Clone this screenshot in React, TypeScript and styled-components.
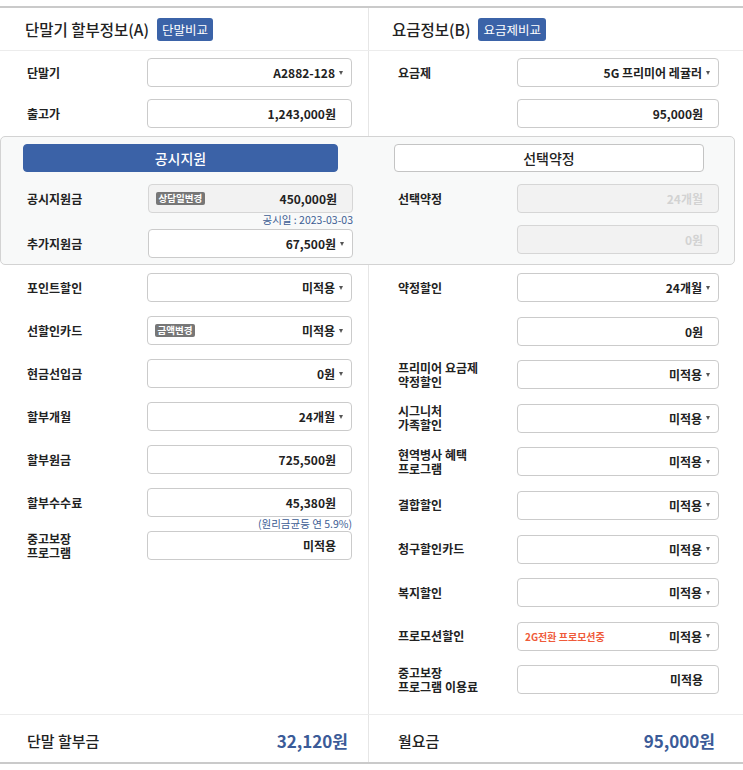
import styled, { createGlobalStyle } from 'styled-components'

const GlobalStyle = createGlobalStyle`
  body {
    margin: 0;
    background: #fff;
  }
`

const LEFT_INPUT = 205
const RIGHT_INPUT = 202

const Page = styled.div`
  padding-top: 6px;
  font-family: 'Noto Sans CJK KR', 'Noto Sans', sans-serif;
  color: #222;
`

const Frame = styled.div`
  border-top: 2px solid #cacaca;
  border-bottom: 2px solid #cacaca;
`

const Header = styled.div`
  display: grid;
  grid-template-columns: 368px 367px;
  height: 42px;
  border-bottom: 1px solid #ececec;
`

const HeaderCell = styled.div<{ $right?: boolean }>`
  display: flex;
  align-items: center;
  padding-left: ${({ $right }) => ($right ? '23px' : '25px')};
  border-left: ${({ $right }) => ($right ? '1px solid #e6e6e6' : 'none')};
`

const Title = styled.h2`
  margin: 0;
  font-size: 15.5px;
  font-weight: 500;
`

const Badge = styled.span`
  margin-left: 8px;
  height: 23px;
  line-height: 23px;
  padding: 0 5px;
  border-radius: 3px;
  background: #3b63a8;
  color: #fff;
  font-size: 12.5px;
`

const Section = styled.div`
  display: grid;
  grid-template-columns: 368px 367px;
`

const Column = styled.div<{ $right?: boolean; $pt: number; $pb: number }>`
  display: flex;
  flex-direction: column;
  padding: ${({ $pt, $pb, $right }) => `${$pt}px 16px ${$pb}px ${$right ? 29 : 27}px`};
  border-left: ${({ $right }) => ($right ? '1px solid #e6e6e6' : 'none')};
`

const Box = styled.div`
  width: 735px;
  box-sizing: border-box;
  display: grid;
  grid-template-columns: 367px 1fr;
  border: 1px solid #d3d3d3;
  border-radius: 5px;
  background: #f8f9f9;
`

const BoxColumn = styled.div<{ $right?: boolean }>`
  display: flex;
  flex-direction: column;
  padding: ${({ $right }) => ($right ? '7px 15px 6px 30px' : '7px 15px 6px 26px')};
`

const Tab = styled.div<{ $active?: boolean }>`
  height: 28px;
  box-sizing: border-box;
  margin: 0 15px 12px -4px;
  display: flex;
  align-items: center;
  justify-content: center;
  border-radius: 4px;
  font-size: 14px;
  font-weight: 500;
  background: ${({ $active }) => ($active ? '#3b62a7' : '#fff')};
  color: ${({ $active }) => ($active ? '#fff' : '#222')};
  border: 1px solid ${({ $active }) => ($active ? '#3b62a7' : '#c4c4c4')};
`

const Row = styled.div<{ $w: number }>`
  display: grid;
  grid-template-columns: 1fr ${({ $w }) => $w}px;
  align-items: center;
`

const Label = styled.div`
  font-size: 12px;
  font-weight: 600;
  line-height: 14px;
`

const Field = styled.div<{ $tone?: 'disabled' | 'muted'; $caret?: boolean }>`
  height: 29px;
  box-sizing: border-box;
  display: flex;
  align-items: center;
  justify-content: flex-end;
  padding: ${({ $caret }) => ($caret ? '0 8px 0 7px' : '0 15px 0 7px')};
  border: 1px solid ${({ $tone }) => ($tone ? '#d6d6d6' : '#cbcbcb')};
  border-radius: 4px;
  background: ${({ $tone }) => ($tone ? '#f2f2f2' : '#fff')};
  color: ${({ $tone }) => ($tone === 'disabled' ? '#d2d2d2' : '#222')};
  font-size: 12px;
  font-weight: 600;
`

const Tag = styled.span`
  margin-right: auto;
  height: 13px;
  line-height: 13px;
  padding: 0 2.5px;
  border-radius: 2px;
  background: #777;
  color: #fff;
  font-size: 9.5px;
  font-weight: 700;
`

const Promo = styled.span`
  margin-right: auto;
  color: #ef5b3b;
  font-size: 10px;
  font-weight: 700;
`

const Caret = styled.span`
  margin-left: 4px;
  width: 0;
  height: 0;
  border-left: 2.5px solid transparent;
  border-right: 2.5px solid transparent;
  border-top: 4px solid #555;
`

const Note = styled.div<{ $h: number }>`
  height: ${({ $h }) => $h}px;
  line-height: 13px;
  text-align: right;
  font-size: 10.5px;
  color: #3d5d94;
`

const Item = styled.div<{ $gap: number }>`
  margin-bottom: ${({ $gap }) => $gap}px;
  &:last-child {
    margin-bottom: 0;
  }
`

const Totals = styled.div`
  display: grid;
  grid-template-columns: 368px 367px;
  height: 47px;
  border-top: 1px solid #ececec;
`

const TotalCell = styled.div<{ $right?: boolean }>`
  display: flex;
  align-items: center;
  justify-content: space-between;
  padding: ${({ $right }) => ($right ? '3px 20px 0 29px' : '3px 20px 0 27px')};
  border-left: ${({ $right }) => ($right ? '1px solid #e6e6e6' : 'none')};
`

const TotalLabel = styled.span`
  font-size: 15px;
  font-weight: 500;
`

const TotalValue = styled.span`
  font-size: 17px;
  font-weight: 700;
  color: #3b5b98;
`

type FieldData = {
  label?: React.ReactNode
  value: string
  caret?: boolean
  tone?: 'disabled' | 'muted'
  tag?: string
  promo?: string
  note?: string
}

const Input = ({ item }: { item: FieldData }) => (
  <Field $caret={item.caret} $tone={item.tone}>
    {item.tag && <Tag>{item.tag}</Tag>}
    {item.promo && <Promo>{item.promo}</Promo>}
    <span>{item.value}</span>
    {item.caret && <Caret />}
  </Field>
)

const Rows = ({ items, w, gap, noteH }: { items: FieldData[]; w: number; gap: number; noteH: number }) => (
  <>
    {items.map((item, i) => (
      <Item key={i} $gap={item.note ? 0 : gap}>
        <Row $w={w}>
          <Label>{item.label}</Label>
          <Input item={item} />
        </Row>
        {item.note && <Note $h={noteH}>{item.note}</Note>}
      </Item>
    ))}
  </>
)

const topLeft: FieldData[] = [
  { label: '단말기', value: 'A2882-128', caret: true },
  { label: '출고가', value: '1,243,000원' },
]

const topRight: FieldData[] = [
  { label: '요금제', value: '5G 프리미어 레귤러', caret: true },
  { value: '95,000원' },
]

const boxLeft: FieldData[] = [
  { label: '공시지원금', value: '450,000원', tag: '상담일변경', tone: 'muted', note: '공시일 : 2023-03-03' },
  { label: '추가지원금', value: '67,500원', caret: true },
]

const boxRight: FieldData[] = [
  { label: '선택약정', value: '24개월', tone: 'disabled' },
  { value: '0원', tone: 'disabled' },
]

const bottomLeft: FieldData[] = [
  { label: '포인트할인', value: '미적용', caret: true },
  { label: '선할인카드', value: '미적용', caret: true, tag: '금액변경' },
  { label: '현금선입금', value: '0원', caret: true },
  { label: '할부개월', value: '24개월', caret: true },
  { label: '할부원금', value: '725,500원' },
  { label: '할부수수료', value: '45,380원', note: '(원리금균등 연 5.9%)' },
  { label: <>중고보장<br />프로그램</>, value: '미적용' },
]

const bottomRight: FieldData[] = [
  { label: '약정할인', value: '24개월', caret: true },
  { value: '0원' },
  { label: <>프리미어 요금제<br />약정할인</>, value: '미적용', caret: true },
  { label: <>시그니처<br />가족할인</>, value: '미적용', caret: true },
  { label: <>현역병사 혜택<br />프로그램</>, value: '미적용', caret: true },
  { label: '결합할인', value: '미적용', caret: true },
  { label: '청구할인카드', value: '미적용', caret: true },
  { label: '복지할인', value: '미적용', caret: true },
  { label: '프로모션할인', value: '미적용', caret: true, promo: '2G전환 프로모션중' },
  { label: <>중고보장<br />프로그램 이용료</>, value: '미적용' },
]

const App = () => {
  return (
    <Page>
      <GlobalStyle />
      <Frame>
        <Header>
          <HeaderCell>
            <Title>단말기 할부정보(A)</Title>
            <Badge>단말비교</Badge>
          </HeaderCell>
          <HeaderCell $right>
            <Title>요금정보(B)</Title>
            <Badge>요금제비교</Badge>
          </HeaderCell>
        </Header>

        <Section>
          <Column $pt={7} $pb={8}>
            <Rows items={topLeft} w={LEFT_INPUT} gap={12} noteH={16} />
          </Column>
          <Column $right $pt={7} $pb={8}>
            <Rows items={topRight} w={RIGHT_INPUT} gap={12} noteH={16} />
          </Column>
        </Section>

        <Box>
          <BoxColumn>
            <Tab $active>공시지원</Tab>
            <Rows items={boxLeft} w={LEFT_INPUT} gap={12} noteH={16} />
          </BoxColumn>
          <BoxColumn $right>
            <Tab>선택약정</Tab>
            <Rows items={boxRight} w={RIGHT_INPUT} gap={12} noteH={16} />
          </BoxColumn>
        </Box>

        <Section>
          <Column $pt={8} $pb={20}>
            <Rows items={bottomLeft} w={LEFT_INPUT} gap={14} noteH={14} />
          </Column>
          <Column $right $pt={8} $pb={20}>
            <Rows items={bottomRight} w={RIGHT_INPUT} gap={14.6} noteH={14} />
          </Column>
        </Section>

        <Totals>
          <TotalCell>
            <TotalLabel>단말 할부금</TotalLabel>
            <TotalValue>32,120원</TotalValue>
          </TotalCell>
          <TotalCell $right>
            <TotalLabel>월요금</TotalLabel>
            <TotalValue>95,000원</TotalValue>
          </TotalCell>
        </Totals>
      </Frame>
    </Page>
  )
}

export default App
